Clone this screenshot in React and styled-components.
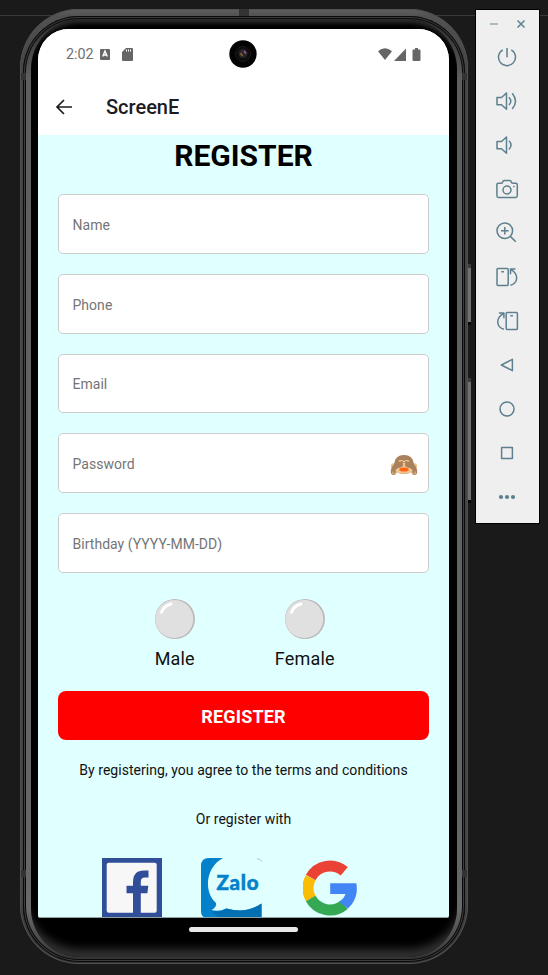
import React from "react";
import styled, { createGlobalStyle } from "styled-components";

const GlobalStyle = createGlobalStyle`
  * { box-sizing: border-box; }
  body { margin: 0; background: #1a1a1a; font-family: Roboto, "Liberation Sans", sans-serif; }
  svg { display: block; flex: none; }
`;

const Desktop = styled.div`
  display: flex;
  align-items: flex-start;
  width: 548px;
  height: 975px;
  padding: 9px 0 0 20px;
  overflow: hidden;
  background: linear-gradient(#1a1a1a 15px, #3a3a3a 15px, #3a3a3a 16px, #1a1a1a 16px);
`;

/* ---------- Device ---------- */

const Shell = styled.div`
  position: relative;
  width: 448px;
  height: 955px;
  padding: 7px 3px 2px;
  border-radius: 59px;
  background: linear-gradient(#606060 0, #525252 7px, #444 60px, #444 880px, #303030 100%);
  box-shadow: inset 0 0 0 1px #505050;
`;

const Rim = styled.div`
  height: 100%;
  padding: 3px;
  border-radius: 56px;
  background: #0a0a0a;
  box-shadow: inset 0 0 0 1px #0a0a0a, inset 0 0 0 2px #3c3c3c;
`;

const Chrome = styled.div`
  height: 100%;
  padding: 1px 5px 2px;
  border-radius: 53px;
  background: linear-gradient(#2c2c2c 0, #5e5e5e 60px, #666 860px, #6a6a6a 890px, #3a3a3a 935px, #333 100%);
`;

const Bezel = styled.div`
  height: 100%;
  padding: 9px 7px 0;
  border-radius: 49px;
  background: #000;
  box-shadow: inset 0 7px 4px -4px #2c2c2c, inset 0 -14px 9px -6px #303030;
`;

const AntennaBand = styled.i`
  position: absolute;
  left: ${(p) => p.$x}px;
  top: ${(p) => p.$y}px;
  width: ${(p) => p.$w}px;
  height: ${(p) => p.$h}px;
  background: #333;
`;

const SideButton = styled.i`
  position: absolute;
  left: 448px;
  top: ${(p) => p.$y}px;
  width: 3px;
  height: ${(p) => p.$h}px;
  border: solid #3c3c3c;
  border-width: 4px 0 3px;
  border-bottom-color: #050505;
  background: #707070;
`;

const Screen = styled.div`
  width: 411px;
  height: 889px;
  overflow: hidden;
  border-radius: 31px 31px 2px 2px;
  background: #e0ffff;
  border-bottom: 1px solid #8fa3a3;
`;

const StatusBar = styled.div`
  position: relative;
  display: flex;
  align-items: center;
  height: 50px;
  padding: 0 37px 0 28px;
  background: #fff;
  color: #707070;
  font-size: 14.3px;
`;

const StatusIcons = styled.div`
  display: flex;
  align-items: center;
  gap: ${(p) => p.$gap}px;
  margin-left: ${(p) => (p.$end ? "auto" : "6px")};
`;

const Lens = styled.svg`
  position: absolute;
  left: 191px;
  top: 11px;
`;

const AppBar = styled.header`
  display: flex;
  align-items: center;
  gap: 33px;
  height: 56px;
  padding: 0 17px;
  background: #fff;
  color: #1c1b1f;
  font-size: 20px;
  font-weight: 500;
`;

/* ---------- Form ---------- */

const Form = styled.main`
  padding: 0 20px;
  color: #111;
`;

const Title = styled.h1`
  margin: 0;
  height: 59.3px;
  line-height: 41px;
  font-size: 30px;
  font-weight: 700;
  text-align: center;
  color: #000;
`;

const Fields = styled.div`
  display: grid;
  gap: 20px;
`;

const Field = styled.label`
  display: flex;
  align-items: center;
  justify-content: space-between;
  height: 59.7px;
  padding: 1.4px 10px 0 13.5px;
  border: 1px solid #ccc;
  border-radius: 5px;
  background: #fff;
  color: #757575;
  font-size: 14px;
  letter-spacing: 0.03px;
`;

const Genders = styled.div`
  display: flex;
  justify-content: center;
  gap: 80px;
  padding: 26px 0 0 2.5px;
  height: 118.2px;
`;

const Gender = styled.div`
  display: flex;
  flex-direction: column;
  align-items: center;
  gap: 8px;
  font-size: 18px;
  line-height: 24px;
  letter-spacing: 0.2px;
`;

const Submit = styled.button`
  display: block;
  width: 100%;
  height: 49px;
  padding: 2px 0 0;
  border: 0;
  border-radius: 8px;
  background: #f00;
  color: #fff;
  font: 700 18px Roboto, sans-serif;
  letter-spacing: 0.2px;
`;

const Note = styled.p`
  margin: ${(p) => p.$gap}px 0 0;
  font-size: 14px;
  line-height: 20px;
  letter-spacing: 0.04px;
  text-align: center;
`;

const Socials = styled.div`
  display: flex;
  gap: 39px;
  padding: 29px 0 0 44px;
`;

const HomeArea = styled.div`
  display: flex;
  justify-content: center;
  padding: 9px 2px 0 0;
`;

const HomeBar = styled.div`
  width: 109px;
  height: 5px;
  border-radius: 3px;
  background: #e8e8e8;
`;

/* ---------- Emulator toolbar ---------- */

const Toolbar = styled.aside`
  width: 65px;
  height: 515px;
  margin-left: 7px;
  border: 1px solid #000;
  background: #efefef;
  color: #5d7f8e;
`;

const WindowControls = styled.div`
  display: flex;
  align-items: center;
  justify-content: space-between;
  height: 25px;
  padding: 3px 14px 0;
`;

const Tool = styled.div`
  display: flex;
  align-items: center;
  justify-content: center;
  height: 44px;
  padding-right: 1px;
`;

const tools = {
  power: <path d="M7.7 4.8a8.5 8.5 0 1 0 8.6 0M12 3v9.3" />,
  volumeUp: <path d="M2 8.5h4.5l5-4.5v16.3l-5-4.5H2zM14 8.2q3.6 4 0 7.8M17.2 4.2q6.6 8 0 15.8" />,
  volumeDown: <path d="M2 8.5h4.5l5-4.5v16.3l-5-4.5H2zM14 7.7q4 4.2 0 8.7" />,
  camera: (
    <>
      <path d="M3.3 6.2H6q1.6 0 1.8-1.4.2-1.2 1.4-1.2h5.6q1.2 0 1.4 1.2.2 1.4 1.8 1.4h2.700q1.6 0 1.6 1.6v11q0 1.6-1.6 1.6H3.5q-1.6 0-1.6-1.6V7.6q0-1.4 1.4-1.4z" />
      <circle cx="12" cy="13" r="4" />
      <path d="M18.2 9.5h1.4" />
    </>
  ),
  zoom: (
    <>
      <circle cx="9.8" cy="9.8" r="7.8" />
      <path d="M15.6 15.6l5.2 5.2M9.8 6v7.6M6 9.8h7.6" />
    </>
  ),
  rotateLeft: <path d="M2.8 3.6h9.6q.8 0 .8.8v15.2q0 .8-.8.8H2.8q-.8 0-.8-.8V4.4q0-.8.8-.8zM6.3 6.8h2.6M15.5 20.3c7.5-2.4 8.6-10.5.8-15.7M20.5 4h-5v5.2" />,
  rotateRight: <path d="M12 3.6h9.6q.8 0 .8.8v15.2q0 .8-.8.8H12q-.8 0-.8-.8V4.4q0-.8.8-.8zM15.3 6.8h2.6M8.9 20.3C1.4 17.9.3 9.8 8.1 4.6M3.9 4h5v5.2" />,
  back: <path d="M6.3 12L17.4 6.3v11.4z" />,
  home: <circle cx="12" cy="12" r="7" />,
  overview: <rect x="6.6" y="6.6" width="10.8" height="10.8" />,
  more: (
    <g fill="currentColor" stroke="none">
      <circle cx="6" cy="12" r="2.1" />
      <circle cx="12" cy="12" r="2.1" />
      <circle cx="18" cy="12" r="2.1" />
    </g>
  ),
};

const ToolIcon = ({ children }) => (
  <svg width="24" height="24" viewBox="0 0 24 24" fill="none" stroke="currentColor" strokeWidth="1.5" strokeLinejoin="round">
    {children}
  </svg>
);

/* ---------- Drawings ---------- */

const MonkeyIcon = styled.svg`
  margin-top: 4px;
`;

const Monkey = () => (
  <MonkeyIcon width="28" height="24" viewBox="0 0 28 24">
    <circle cx="3.7" cy="12" r="2.7" fill="#f0bd78" />
    <circle cx="24.3" cy="12" r="2.7" fill="#f0bd78" />
    <path d="M14 1c-7 0-9.500 4.500-9.800 9.500C4 16 7 20 14 20s10-4 9.800-9.500C23.500 5.500 21 1 14 1z" fill="#a8825f" />
    <path d="M8 8.500c0-3 4-3 6-1.500 2-1.500 6-1.500 6 1.500l3 7c-1 3-5 4.300-9 4.300s-8-1.300-9-4.300z" fill="#f1c58a" />
    <path d="M.8 18.500C.6 14 3 10.500 7.500 8c3-1.500 6 .8 5.500 3.300-.4 2-3 2.500-5 2.600l-2.700 2.100 1.300 2.500c-.2 3-5.600 3.500-5.800 0zM27.200 18.500C27.400 14 25 10.500 20.500 8c-3-1.500-6 .8-5.500 3.300.4 2 3 2.500 5 2.600l2.700 2.100-1.300 2.500c.2 3 5.600 3.500 5.800 0z" fill="#a8825f" />
    <path d="M11 7.500l2.400 1M17 7.500l-2.400 1" stroke="#8e6549" strokeWidth="1" />
    <ellipse cx="14" cy="15.500" rx="4.600" ry="2" fill="#ff6517" />
    <path d="M2.800 20v-2.600M5 20.500v-2.200M25.200 20v-2.600M23 20.500v-2.200" stroke="#efc28b" strokeWidth=".9" />
  </MonkeyIcon>
);

const Ball = () => (
  <svg width="40" height="40" viewBox="0 0 40 40">
    <circle cx="20" cy="20" r="20" fill="#bdb9b9" />
    <circle cx="19.300" cy="20" r="19" fill="#e0e0e0" />
    <path d="M6.500 13.300Q9 6.500 16 5" fill="none" stroke="#fff" strokeWidth="3" strokeLinecap="round" />
  </svg>
);

const FacebookLogo = () => (
  <svg width="60" height="60" viewBox="0 0 60 60">
    <path d="M0 0h60v60H0z" fill="#304f98" />
    <rect x="4.700" y="4.700" width="50" height="50" rx="2" fill="#f7f7f7" />
    <path d="M31 60V35.300h-6.500v-7.500H31V24q0-11.500 11-11.500h4.500v7H43q-4.200 0-4.200 4.200v4.100h7.500l-.9 7.500h-6.600V60z" fill="#304f98" />
  </svg>
);

const ZaloLogo = () => (
  <svg width="61" height="60" viewBox="0 0 61 60">
    <path d="M8 0h14C5 9 2 33 15 45q1 4-4.500 7 7.500 2 15-1.500 20 5.500 35-5V60H7q-7 0-7-7V8q0-8 8-8z" fill="#0481cb" />
    <path d="M10 53q8 2 15.500-2.500 20 5.500 35-5V60H18z" fill="#0070b2" />
    <path d="M56 .5q3.500 1 5 3" stroke="#9ccbe0" fill="none" />
    <text x="15.500" y="32" fill="#0481cb" stroke="#0481cb" strokeWidth=".5" fontFamily="Lato" fontWeight="900" fontSize="20.500" textLength="42">Zalo</text>
  </svg>
);

const GoogleSvg = styled.svg`
  margin: 2px 0 0 2px;
`;

const GoogleLogo = () => (
  <GoogleSvg width="54" height="56" viewBox="0 0 54 56">
    <g fill="none" strokeWidth="11">
      <path d="M7.700 17.500A22 22 0 0 1 41.300 11.300" stroke="#ea4335" />
      <path d="M7.700 17.500A22 22 0 0 0 7.700 38.500" stroke="#fbbc05" />
      <path d="M7.700 38.500A22 22 0 0 0 41.200 44.800" stroke="#34a853" />
    </g>
    <path d="M27.200 23.200h26.100c2 10-1.500 19.500-8.500 25.300l-8.600-6.800q5-3.200 6.200-7.700H27.200z" fill="#4285f4" />
  </GoogleSvg>
);

const fields = ["Name", "Phone", "Email", "Password", "Birthday (YYYY-MM-DD)"];

export default function App() {
  return (
    <>
      <GlobalStyle />
      <Desktop>
        <Shell>
          <Rim>
            <Chrome>
              <Bezel>
                <Screen>
                  <StatusBar>
                    2:02
                    <StatusIcons $gap={12}>
                      <svg width="10" height="11" viewBox="0 0 10 11">
                        <rect width="10" height="11" rx="1" fill="#666" />
                        <path d="M2.700 7.500L5 2l2.300 5.500M3.600 6h2.800" fill="none" stroke="#fff" strokeWidth="1.400" />
                      </svg>
                      <svg width="11" height="13" viewBox="0 0 11 13">
                        <path d="M4 0h6q1 0 1 1v11q0 1-1 1H1q-1 0-1-1V4z" fill="#666" />
                        <path d="M4.500 1.500v2M6.500 1.500v2M8.500 1.500v2" stroke="#fff" />
                      </svg>
                    </StatusIcons>
                    <Lens width="28" height="28" viewBox="0 0 28 28">
                      <circle cx="14" cy="14" r="13.700" fill="#030303" />
                      <circle cx="14" cy="14" r="7.500" fill="#0d0d0d" stroke="#181818" />
                      <circle cx="14" cy="13.500" r="4.500" fill="#29232b" />
                      <path d="M11.500 13l2 3" stroke="#7b5b2c" strokeWidth="2" />
                      <path d="M15 11l2 2.500" stroke="#a05a9b" strokeWidth="1.500" />
                    </Lens>
                    <StatusIcons $end $gap={2}>
                      <svg width="14" height="12" viewBox="0 0 14 12">
                        <path d="M0 3.200Q7-2.600 14 3.200L7 12z" fill="#666" />
                      </svg>
                      <svg width="18" height="13" viewBox="0 0 18 13" overflow="visible">
                        <path d="M12 .5V13H0zM19.500 1.500H21V0h3v1.500h1.500q1 0 1 1V12q0 1-1 1h-6q-1 0-1-1V2.500q0-1 1-1z" fill="#666" />
                      </svg>
                    </StatusIcons>
                  </StatusBar>
                  <AppBar>
                    <svg width="18" height="18" viewBox="0 0 18 18" fill="none" stroke="#1c1b1f" strokeWidth="1.700">
                      <path d="M17 9H2M9 2L2 9l7 7" />
                    </svg>
                    ScreenE
                  </AppBar>
                  <Form>
                    <Title>REGISTER</Title>
                    <Fields>
                      {fields.map((name) => (
                        <Field key={name}>
                          {name}
                          {name === "Password" && <Monkey />}
                        </Field>
                      ))}
                    </Fields>
                    <Genders>
                      <Gender><Ball />Male</Gender>
                      <Gender><Ball />Female</Gender>
                    </Genders>
                    <Submit>REGISTER</Submit>
                    <Note $gap={20}>By registering, you agree to the terms and conditions</Note>
                    <Note $gap={29}>Or register with</Note>
                    <Socials>
                      <FacebookLogo />
                      <ZaloLogo />
                      <GoogleLogo />
                    </Socials>
                  </Form>
                </Screen>
                <HomeArea><HomeBar /></HomeArea>
              </Bezel>
            </Chrome>
          </Rim>
          <AntennaBand $x={219} $y={0} $w={10} $h={7} />
          <AntennaBand $x={1} $y={64} $w={5} $h={7} />
          <AntennaBand $x={442} $y={64} $w={5} $h={7} />
          <AntennaBand $x={1} $y={861} $w={5} $h={7} />
          <AntennaBand $x={442} $y={861} $w={5} $h={7} />
          <SideButton $y={255} $h={61} />
          <SideButton $y={369} $h={125} />
        </Shell>
        <Toolbar>
          <WindowControls>
            <svg width="8" height="8" viewBox="0 0 8 8"><path d="M0 4h8" stroke="#a3b6bf" strokeWidth="1.800" /></svg>
            <svg width="8" height="8" viewBox="0 0 8 8"><path d="M.5.5l7 7m0-7l-7 7" stroke="#5d7f8e" strokeWidth="1.500" /></svg>
          </WindowControls>
          {Object.entries(tools).map(([name, drawing]) => (
            <Tool key={name}><ToolIcon>{drawing}</ToolIcon></Tool>
          ))}
        </Toolbar>
      </Desktop>
    </>
  );
}
